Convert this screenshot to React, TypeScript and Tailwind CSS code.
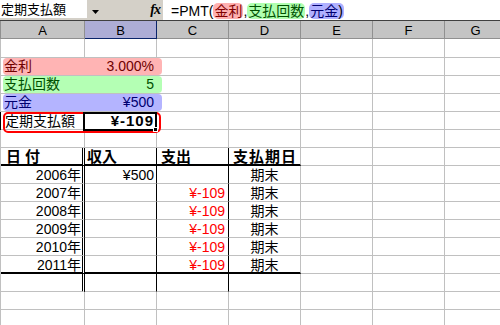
import React from "react";

const GRID = "grid grid-cols-[84px_72px_72px_72px_72px_72px_62px] grid-rows-[100%] leading-[16px]";
const GRAY = "border-r border-b border-[#c0c0c0]";

function GrayCells({ n }: { n: number }) {
  return (
    <>
      {Array.from({ length: n }).map((_, i) => (
        <div key={i} className={GRAY} />
      ))}
    </>
  );
}

function EmptyRow({ tall = false }: { tall?: boolean }) {
  return (
    <div className={`${GRID} ${tall ? "h-[19px]" : "h-[18px]"} border-l border-[#c0c0c0]`}>
      <GrayCells n={7} />
    </div>
  );
}

function PillRow({ label, value, bg, fg }: { label: string; value: string; bg: string; fg: string }) {
  return (
    <div className={`${GRID} h-[18px] border-l border-[#c0c0c0]`}>
      <div className="col-span-2 border-r border-b border-[#c0c0c0]">
        <div
          className={`ml-[2px] w-[159px] h-[17px] rounded-[4px] ${bg} ${fg} flex items-center justify-between pl-[1px] pr-[8px] text-[14px] leading-[17px]`}
        >
          <span>{label}</span>
          <span>{value}</span>
        </div>
      </div>
      <GrayCells n={5} />
    </div>
  );
}

// table borders: A has the double line, B and C thin black, D stays gridline grey
function tableCls(thick: boolean) {
  const b = thick ? "border-b-2 border-b-black" : "border-b border-b-[#c0c0c0]";
  return {
    a: `border-r-[3px] [border-right-style:double] border-r-black ${b}`,
    b: `border-r border-r-black ${b}`,
    c: `border-r border-r-black ${b}`,
    d: `border-r border-r-[#c0c0c0] ${b}`,
  };
}

function YearRow({ year, income, last = false }: { year: string; income?: string; last?: boolean }) {
  const t = tableCls(last);
  return (
    <div className={`${GRID} h-[18px] border-l border-[#c0c0c0] text-[14px]`}>
      <div className={`${t.a} flex items-center justify-end pr-[1px] pt-[1px]`}>{year}年</div>
      <div className={`${t.b} flex items-center justify-end pr-[2px] pt-[1px]`}>{income}</div>
      <div className={`${t.c} flex items-center justify-end pr-[3px] pt-[1px] text-[#ff0000]`}>
        {income ? "" : "¥-109"}
      </div>
      <div className={`${t.d} flex items-center justify-center pt-[1px]`}>期末</div>
      <GrayCells n={3} />
    </div>
  );
}

export default function App() {
  const head = tableCls(true);
  const plain = tableCls(false);

  return (
    <div className="w-[500px] h-[325px] overflow-hidden bg-white text-black leading-[16px] font-['Liberation_Sans','Noto_Sans_CJK_JP',sans-serif]">
      {/* Name box + formula bar */}
      <div className="flex h-[21px] border-b border-[#404040] bg-[#d4d0c8]">
        <div className="w-[87px] h-[18px] bg-white overflow-hidden whitespace-nowrap text-[13px] leading-[18px] pt-[1px] pl-[1px]">
          定期支払額
        </div>
        <div className="w-[76px] flex items-start">
          <svg width="7" height="4" viewBox="0 0 7 4" className="ml-[5px] mt-[10px]">
            <polygon points="0,0 7,0 3.5,4" fill="#000" />
          </svg>
          <span className="ml-auto mr-[3px] mt-[2px] text-[14px] leading-[16px] font-bold italic tracking-[-1px] font-['Liberation_Serif',serif]">
            fx
          </span>
        </div>
        <div className="flex-1 h-[20px] bg-white flex items-start pl-[8px] pt-[3px] text-[14px] leading-[16px] whitespace-nowrap">
          <span>=PMT(</span>
          <span className="h-[16px] px-[1px] rounded-[5px] bg-[#ffb0b0] text-[#800000]">金利</span>
          <span>,</span>
          <span className="h-[16px] px-[1px] rounded-[5px] bg-[#b0ffb0] text-[#005000]">支払回数</span>
          <span>,</span>
          <span className="h-[16px] px-[1px] rounded-[5px] bg-[#b0b0ff] text-[#000070]">
            元金<span className="text-black">)</span>
          </span>
        </div>
      </div>

      {/* Column headers */}
      <div className={`${GRID} h-[18px] border-l border-[#909090] bg-[#c4c4c4] text-[13px]`}>
        {["A", "B", "C", "D", "E", "F", "G"].map((c) =>
          c === "B" ? (
            <div
              key={c}
              className="border-r border-b border-[#0a246a] bg-[#adadd6] flex items-center justify-center pt-[2px]"
            >
              {c}
            </div>
          ) : (
            <div key={c} className="border-r border-b border-[#909090] flex items-center justify-center pt-[2px]">
              {c}
            </div>
          )
        )}
      </div>

      {/* Sheet */}
      <EmptyRow tall />
      <PillRow label="金利" value="3.000%" bg="bg-[#ffb4b4]" fg="text-[#700000]" />
      <PillRow label="支払回数" value="5" bg="bg-[#b4ffb4]" fg="text-[#005000]" />
      <PillRow label="元金" value="¥500" bg="bg-[#b4b4ff]" fg="text-[#000070]" />

      <div className={`${GRID} relative h-[18px] border-l border-black text-[14px]`}>
        <div className={`${GRAY} flex items-center pl-[4px] pt-[1px]`}>定期支払額</div>
        <div className={`${GRAY} flex items-center justify-end pr-[2px] pt-[1px] text-[15px] font-bold tracking-[1px]`}>
          ¥-109
        </div>
        <GrayCells n={5} />
        <div className="absolute left-[2px] top-0 w-[158px] h-[21px] border-2 border-[#ff0000] rounded-[5px]" />
        <div className="absolute left-[82px] top-0 w-[74px] h-[19px] border-2 border-black">
          <div className="absolute right-[-3px] bottom-[-3px] w-[5px] h-[5px] bg-black border border-white" />
        </div>
      </div>

      <EmptyRow />

      <div className={`${GRID} h-[18px] border-l border-[#c0c0c0] text-[15px] font-bold`}>
        <div className={`${head.a} flex items-center pl-[5px] pt-[1px] tracking-[4px]`}>日付</div>
        <div className={`${head.b} flex items-center pl-[2px] pt-[1px]`}>収入</div>
        <div className={`${head.c} flex items-center pl-[4px] pt-[1px]`}>支出</div>
        <div className={`${head.d} flex items-center pl-[4px] pt-[1px] tracking-[1px]`}>支払期日</div>
        <GrayCells n={3} />
      </div>

      <YearRow year="2006" income="¥500" />
      <YearRow year="2007" />
      <YearRow year="2008" />
      <YearRow year="2009" />
      <YearRow year="2010" />
      <YearRow year="2011" last />

      <div className={`${GRID} h-[18px] border-l border-[#c0c0c0]`}>
        <div className={plain.a} />
        <div className={plain.b} />
        <div className={plain.c} />
        <div className={plain.d} />
        <GrayCells n={3} />
      </div>

      <EmptyRow />
      <EmptyRow />
    </div>
  );
}
